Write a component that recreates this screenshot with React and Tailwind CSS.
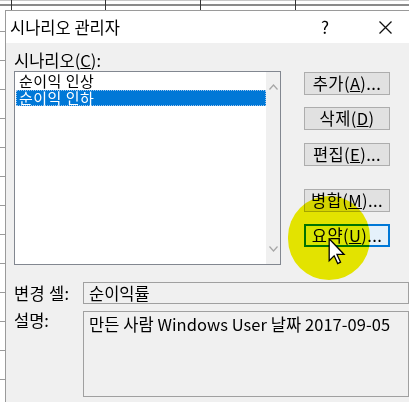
import React from "react";

const font = { fontFamily: '"Noto Sans CJK KR", "Noto Sans", sans-serif' };

function Btn({ children, active }) {
  return (
    <div
      className={
        "h-[23px] w-[86px] flex items-center justify-center text-[16.5px] leading-none tracking-[0.4px] text-black border " +
        (active
          ? "bg-[#e5f1fb] border-[#0078d7] shadow-[inset_0_0_0_1px_#0078d7]"
          : "bg-[#e1e1e1] border-[#adadad]")
      }
    >
      {children}
    </div>
  );
}

function Chevron({ up }) {
  return (
    <svg width="9" height="6" viewBox="0 0 9 6">
      <path
        d={up ? "M0.5 5.5 L4.5 1 L8.5 5.5" : "M0.5 0.5 L4.5 5 L8.5 0.5"}
        fill="none"
        stroke="#a6a6a6"
        strokeWidth="1.2"
      />
    </svg>
  );
}

export default function App() {
  const rows = [31, 60, 89, 118, 147, 176, 205, 234, 263, 292, 321, 350, 379];
  return (
    <div className="relative w-[409px] h-[402px] overflow-hidden bg-white" style={font}>
      {/* spreadsheet behind */}
      <div className="absolute left-0 top-[4px] w-full h-[2px] bg-[#8a8a8a]" />
      <div className="absolute left-0 top-[0px] w-full h-[1px] bg-[#c8c8c8]" />
      {[11, 105, 200, 295].map((x) => (
        <div key={x} className="absolute top-0 h-[10px] w-[1px] bg-[#333]" style={{ left: x }} />
      ))}
      {rows.map((y) => (
        <div key={y} className="absolute left-0 w-[5px] h-[1px] bg-[#9a9a9a]" style={{ top: y }} />
      ))}

      {/* dialog */}
      <div className="absolute left-[5px] top-[10px] w-[420px] h-[400px] border-l border-t border-[#9a9a9a] bg-[#f0f0f0] flex flex-col">
        <div className="h-[32px] bg-white flex items-center pl-[4px] text-[16.5px] text-black">
          <span className="flex-1">시나리오 관리자</span>
          <span className="w-[14px] text-center text-[17px] mr-[47px]">?</span>
          <svg width="13" height="13" viewBox="0 0 13 13" className="mr-[33px]">
            <path d="M0.5 0.5 L12.5 12.5 M12.5 0.5 L0.5 12.5" stroke="#111" strokeWidth="1.3" />
          </svg>
        </div>

        <div className="pl-[8px] pt-[8px] flex flex-col">
          <div className="h-[20px] leading-[18px] text-[16.5px] text-black">
            시나리오(<u>C</u>):
          </div>
          <div className="flex">
            {/* list */}
            <div className="w-[267px] h-[194px] border border-[#828790] bg-white flex">
              <div className="flex-1 pl-[1px] pt-[1px] flex flex-col text-[15px] leading-[16px]">
                <div className="h-[17px] pl-[3px] text-black tracking-[0.5px]">순이익 인상</div>
                <div className="h-[16px] pl-[3px] bg-[#0078d7] text-white tracking-[0.5px] outline-1 outline-dotted outline-offset-[-1px] outline-[#9fc6ee]">
                  순이익 인하
                </div>
              </div>
              <div className="w-[14px] bg-[#f0f0f0] flex flex-col items-center justify-between py-[12px]">
                <Chevron up />
                <Chevron />
              </div>
            </div>
            {/* buttons */}
            <div className="ml-[23px] pt-[1px] flex flex-col">
              <Btn>추가(<u>A</u>)...</Btn>
              <div className="mt-[12px]">
                <Btn>삭제(<u>D</u>)</Btn>
              </div>
              <div className="mt-[13px]">
                <Btn>편집(<u>E</u>)...</Btn>
              </div>
              <div className="mt-[23px]">
                <Btn>병합(<u>M</u>)...</Btn>
              </div>
              <div className="mt-[12px]">
                <Btn active>요약(<u>U</u>)...</Btn>
              </div>
            </div>
          </div>

          <div className="mt-[16px] flex items-center text-[16.5px] text-black">
            <div className="w-[69px] tracking-[0.3px]">변경 셀:</div>
            <div className="w-[326px] h-[22px] border border-[#a0a0a0] flex items-center pl-[5px] leading-none">순이익률</div>
          </div>
          <div className="mt-[5px] flex items-start text-[16.5px] text-black">
            <div className="w-[69px] leading-[16px] pt-[1px]">설명:</div>
            <div className="w-[326px] h-[86px] border border-[#a0a0a0] pl-[5px] pt-[2px] leading-[20px] whitespace-nowrap tracking-[0.05px]">
              만든 사람 Windows User 날짜 2017-09-05
            </div>
          </div>
        </div>
      </div>

      {/* yellow highlight */}
      <div className="absolute left-[288px] top-[196px] w-[82px] h-[84px] rounded-full bg-[#f2f200] mix-blend-multiply blur-[0.6px]" />

      {/* cursor */}
      <svg className="absolute left-[328px] top-[238px]" width="18" height="27" viewBox="0 0 12 19">
        <path
          d="M0.5 0.5 L0.5 16 L4 12.5 L6.5 18 L8.5 17 L6 11.6 L11 11.6 Z"
          fill="#fff"
          stroke="#000"
          strokeWidth="0.9"
          strokeLinejoin="miter"
        />
      </svg>
    </div>
  );
}
